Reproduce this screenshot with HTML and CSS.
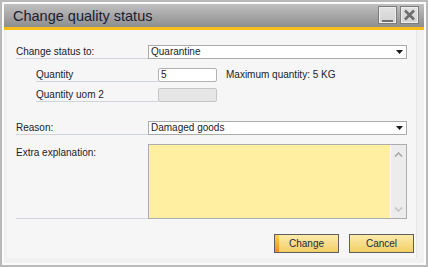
FILE: index.html
```html
<!DOCTYPE html>
<html>
<head>
<meta charset="utf-8">
<link rel="stylesheet" href="styles.css">
</head>
<body>
<div class="window">
  <div class="titlebar">
    <span class="title">Change quality status</span>
    <div class="winbtns">
      <span class="wbtn"><svg width="17" height="16" viewBox="0 0 17 16"><rect x="3" y="13" width="11" height="2" fill="#6e6e6e"/></svg></span>
      <span class="wbtn"><svg width="17" height="16" viewBox="0 0 17 16"><path d="M4 3.5 L13 12.5 M13 3.5 L4 12.5" stroke="#6e6e6e" stroke-width="2.6" fill="none"/></svg></span>
    </div>
  </div>
  <div class="stripe"></div>
  <div class="frame">
    <div class="panel">
      <div class="row">
        <div class="lbl wide">Change status to:</div>
        <div class="select"><span>Quarantine</span><svg class="arrow" width="7" height="4" viewBox="0 0 7 4"><polygon points="0,0 7,0 3.5,4" fill="#1a1a1a"/></svg></div>
      </div>
      <div class="row sub r2">
        <div class="lbl narrow">Quantity</div>
        <div class="input">5</div>
        <div class="note">Maximum quantity: 5 KG</div>
      </div>
      <div class="row sub r3">
        <div class="lbl narrow">Quantity uom 2</div>
        <div class="input disabled"></div>
      </div>
      <div class="row r4">
        <div class="lbl wide">Reason:</div>
        <div class="select"><span>Damaged goods</span><svg class="arrow" width="7" height="4" viewBox="0 0 7 4"><polygon points="0,0 7,0 3.5,4" fill="#1a1a1a"/></svg></div>
      </div>
      <div class="row r5">
        <div class="lbl wide tall">Extra explanation:</div>
        <div class="textarea">
          <div class="text-area-fill"></div>
          <div class="scrollbar">
            <svg width="9" height="5" viewBox="0 0 9 5"><polyline points="1,4.5 4.5,1 8,4.5" fill="none" stroke="#a6a6a6" stroke-width="1.6"/></svg>
            <svg width="9" height="5" viewBox="0 0 9 5"><polyline points="1,0.5 4.5,4 8,0.5" fill="none" stroke="#c4c4c4" stroke-width="1.6"/></svg>
          </div>
        </div>
      </div>
      <div class="buttons">
        <div class="btn primary"><span class="mark"></span><span class="btext">Change</span></div>
        <div class="btn"><span class="btext">Cancel</span></div>
      </div>
    </div>
  </div>
</div>
</body>
</html>
```
FILE: styles.css
```css
html, body {
  margin: 0;
  padding: 0;
  background: #ffffff;
}
body {
  font-family: "Liberation Sans", Arial, sans-serif;
  font-size: 10px;
  color: #20222e;
}
.window {
  box-sizing: border-box;
  width: 428px;
  height: 267px;
  border: 2px solid #b9b9b9;
  padding: 2px;
  background: #fbfbfb;
  display: flex;
  flex-direction: column;
}
.titlebar {
  box-sizing: border-box;
  height: 23px;
  flex: none;
  display: flex;
  align-items: flex-start;
  background: linear-gradient(#c0c0c0, #8e8e8e);
  padding: 0 5px 0 9px;
}
.title {
  font-size: 14.5px;
  line-height: 23px;
  padding-top: 1px;
  color: #1c1c34;
}
.winbtns {
  margin-left: auto;
  margin-top: 2px;
  display: flex;
  gap: 3px;
}
.wbtn {
  box-sizing: border-box;
  width: 19px;
  height: 18px;
  border: 1px solid #7c7c7c;
  background: linear-gradient(#e2e2e2, #d2d2d2);
  box-shadow: inset 0 0 0 1px #ededed;
  display: block;
}
.wbtn svg { display: block; }
.stripe {
  height: 3px;
  flex: none;
  background: #f8bd1a;
}
.frame {
  flex: 1;
  background: #f1f1f1;
  padding: 0 7px 5px 3px;
  display: flex;
}
.panel {
  flex: 1;
  background: #f6f6f6;
  padding: 15px 0 0 9px;
  display: flex;
  flex-direction: column;
  border-right: 1px solid #e6e6e6;
}
.row {
  display: flex;
  align-items: flex-start;
  height: 14px;
  line-height: 14px;
}
.sub { padding-left: 20px; }
.r2 { margin-top: 9px; }
.r3 { margin-top: 6px; }
.r4 { margin-top: 19px; }
.r5 { margin-top: 9px; height: 75px; }
.lbl {
  box-sizing: border-box;
  height: 14px;
  border-bottom: 1px solid #d0d4dc;
  white-space: nowrap;
  line-height: 14px;
}
.wide { width: 132px; }
.narrow { width: 122px; }
.tall { height: 75px; padding-top: 2px; }
.select {
  box-sizing: border-box;
  width: 259px;
  height: 14px;
  border: 1px solid #ababab;
  background: #ffffff;
  display: flex;
  align-items: center;
  justify-content: space-between;
  padding: 0 2px 0 2px;
  line-height: 12px;
}
.arrow { display: block; margin-right: 1px; }
.input {
  box-sizing: border-box;
  width: 59px;
  height: 14px;
  border: 1px solid #b3b3b3;
  border-radius: 2px;
  background: #ffffff;
  padding-left: 2px;
  line-height: 12px;
}
.input.disabled {
  background: #e6e6e6;
  border-color: #c6c6c6;
}
.note {
  margin-left: 9px;
  line-height: 14px;
}
.textarea {
  box-sizing: border-box;
  width: 259px;
  height: 75px;
  border: 1px solid #acacac;
  display: flex;
}
.text-area-fill {
  flex: 1;
  background: #ffefa0;
}
.scrollbar {
  width: 16px;
  box-sizing: border-box;
  border-left: 1px solid #fafafa;
  background: #ececec;
  display: flex;
  flex-direction: column;
  align-items: center;
  justify-content: space-between;
  padding: 7px 0 6px 0;
}
.scrollbar svg { display: block; }
.buttons {
  margin-top: 15px;
  display: flex;
  justify-content: flex-end;
  gap: 10px;
  padding-right: 2px;
}
.btn {
  box-sizing: border-box;
  width: 65px;
  height: 19px;
  border: 1px solid #5e5e5e;
  background: linear-gradient(#fcebaa, #f2cf66);
  display: flex;
  align-items: stretch;
  position: relative;
}
.mark {
  width: 4px;
  flex: none;
  background: linear-gradient(#fbd347, #ee8f1b);
}
.btext {
  flex: 1;
  text-align: center;
  line-height: 17px;
  color: #1e2a36;
}
.primary .btext { padding-right: 4px; }
```
